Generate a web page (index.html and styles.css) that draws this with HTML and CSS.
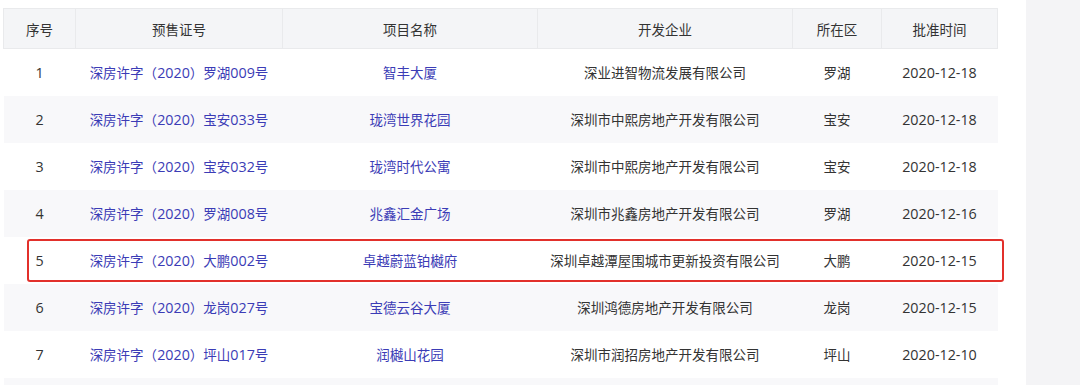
FILE: index.html
```html
<!DOCTYPE html>
<html lang="zh">
<head>
<meta charset="utf-8">
<link rel="stylesheet" href="styles.css">
</head>
<body>
<div class="page">
  <div class="content">
    <div class="table-wrap">
      <table class="list">
        <colgroup>
          <col class="c1"><col class="c2"><col class="c3"><col class="c4"><col class="c5"><col class="c6">
        </colgroup>
        <thead>
          <tr><th>序号</th><th>预售证号</th><th>项目名称</th><th>开发企业</th><th>所在区</th><th>批准时间</th></tr>
        </thead>
        <tbody>
          <tr><td class="num">1</td><td class="link">深房许字（<span class="d">2020</span>）罗湖<span class="d">009</span>号</td><td class="link">智丰大厦</td><td>深业进智物流发展有限公司</td><td>罗湖</td><td class="num">2020-12-18</td></tr>
          <tr><td class="num">2</td><td class="link">深房许字（<span class="d">2020</span>）宝安<span class="d">033</span>号</td><td class="link">珑湾世界花园</td><td>深圳市中熙房地产开发有限公司</td><td>宝安</td><td class="num">2020-12-18</td></tr>
          <tr><td class="num">3</td><td class="link">深房许字（<span class="d">2020</span>）宝安<span class="d">032</span>号</td><td class="link">珑湾时代公寓</td><td>深圳市中熙房地产开发有限公司</td><td>宝安</td><td class="num">2020-12-18</td></tr>
          <tr><td class="num">4</td><td class="link">深房许字（<span class="d">2020</span>）罗湖<span class="d">008</span>号</td><td class="link">兆鑫汇金广场</td><td>深圳市兆鑫房地产开发有限公司</td><td>罗湖</td><td class="num">2020-12-16</td></tr>
          <tr><td class="num">5</td><td class="link">深房许字（<span class="d">2020</span>）大鹏<span class="d">002</span>号</td><td class="link">卓越蔚蓝铂樾府</td><td>深圳卓越潭屋围城市更新投资有限公司</td><td>大鹏</td><td class="num">2020-12-15</td></tr>
          <tr><td class="num">6</td><td class="link">深房许字（<span class="d">2020</span>）龙岗<span class="d">027</span>号</td><td class="link">宝德云谷大厦</td><td>深圳鸿德房地产开发有限公司</td><td>龙岗</td><td class="num">2020-12-15</td></tr>
          <tr><td class="num">7</td><td class="link">深房许字（<span class="d">2020</span>）坪山<span class="d">017</span>号</td><td class="link">润樾山花园</td><td>深圳市润招房地产开发有限公司</td><td>坪山</td><td class="num">2020-12-10</td></tr>
          <tr><td>&nbsp;</td><td></td><td></td><td></td><td></td><td></td></tr>
        </tbody>
      </table>
      <div class="highlight"></div>
    </div>
  </div>
  <div class="side"></div>
</div>
</body>
</html>
```

FILE: styles.css
```css
* { box-sizing: border-box; }
html, body { margin: 0; padding: 0; background: #ffffff; }
body {
  font-family: "Open Sans", "Noto Sans CJK SC", sans-serif;
  color: #333333;
  width: 1080px;
  height: 385px;
  overflow: hidden;
}
.page {
  display: flex;
  height: 385px;
}
.content {
  flex: 0 0 1026px;
  padding: 8px 0 0 3px;
}
.side {
  flex: 1 1 auto;
  background: #f4f4f6;
}
.table-wrap {
  position: relative;
  width: 994px;
}
.list {
  width: 994px;
  border-collapse: collapse;
  table-layout: fixed;
  font-size: 13.5px;
}
.c1 { width: 72px; }
.c2 { width: 207px; }
.c3 { width: 255px; }
.c4 { width: 255px; }
.c5 { width: 89px; }
.c6 { width: 116px; }
.list th {
  height: 40px;
  background: #f4f5f7;
  font-weight: normal;
  color: #333333;
  border: 1px solid #e9eaec;
  text-align: center;
  padding: 0;
}
.list td {
  height: 47px;
  text-align: center;
  padding: 0;
  white-space: nowrap;
}
.list td.num, .list .d { font-size: 14.3px; }
.list tbody tr:nth-child(even) td { background: #f8f8fa; }
.list td.link { color: #3b3cb6; }
.highlight {
  position: absolute;
  left: 24px;
  top: 231px;
  width: 977px;
  height: 43px;
  border: 2px solid #e2302b;
  border-radius: 3px;
  pointer-events: none;
}
```
